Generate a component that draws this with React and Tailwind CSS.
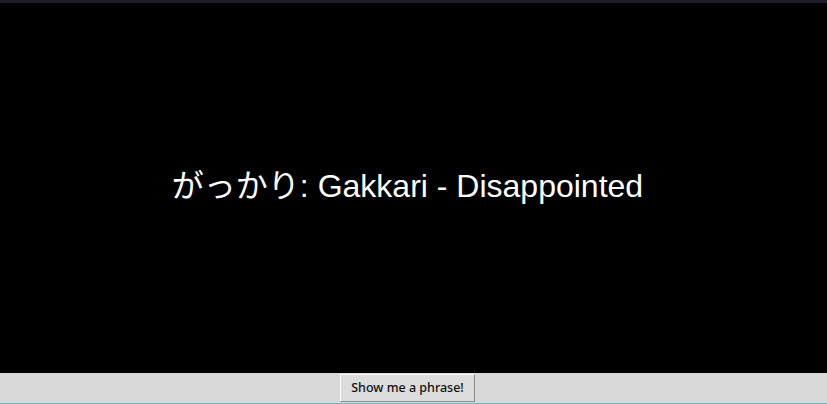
export default function App() {
  return (
    <div className="flex h-[404px] w-full flex-col bg-black">
      <div className="h-[3px] bg-[#1e1e2b]" />
      <div className="flex flex-1 items-center justify-center pb-[4px] pr-[12px]">
        <p className="text-[32px] text-white font-['Liberation_Sans','Noto_Sans_CJK_JP',sans-serif]">
          がっかり: Gakkari - Disappointed
        </p>
      </div>
      <div className="flex h-[30px] items-start justify-center bg-[#d9d9d9] pt-[1px] pr-[12px]">
        <button className="h-[28px] w-[135px] border border-t-white border-l-white border-r-[#8a8a8a] border-b-[#8a8a8a] bg-[#dcdcdc] text-[12.5px] font-medium text-[#111] font-['Noto_Sans',sans-serif]">
          Show me a phrase!
        </button>
      </div>
      <div className="h-px bg-[#6fb3d6]" />
    </div>
  );
}
